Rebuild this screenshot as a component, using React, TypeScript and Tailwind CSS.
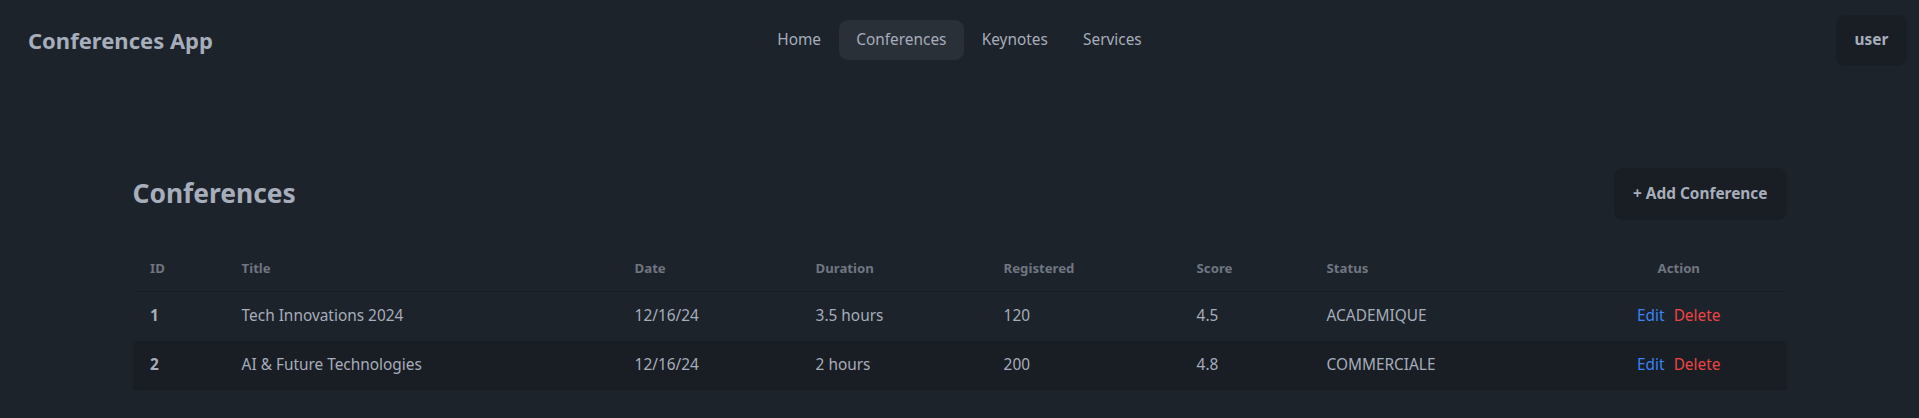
import { useState } from "react";

interface Conference {
  id: number;
  title: string;
  date: string;
  duration: string;
  registered: number;
  score: number;
  status: string;
}

const conferences: Conference[] = [
  { id: 1, title: "Tech Innovations 2024", date: "12/16/24", duration: "3.5 hours", registered: 120, score: 4.5, status: "ACADEMIQUE" },
  { id: 2, title: "AI & Future Technologies", date: "12/16/24", duration: "2 hours", registered: 200, score: 4.8, status: "COMMERCIALE" },
];

const links = ["Home", "Conferences", "Keynotes", "Services"];

function Navbar() {
  const [active, setActive] = useState("Conferences");
  return (
    <div className="flex h-[80px] items-center px-3">
      <div className="flex-1">
        <a className="px-4 text-[22px] font-bold">Conferences App</a>
      </div>
      <ul className="flex items-center">
        {links.map((link) => (
          <li key={link}>
            <button
              onClick={() => setActive(link)}
              className={`rounded-[9px] px-[17.6px] py-[9px] text-[15.4px] leading-[22px] ${
                active === link ? "bg-[#2a3038]" : ""
              }`}
            >
              {link}
            </button>
          </li>
        ))}
      </ul>
      <div className="flex flex-1 justify-end">
        <button className="h-[51px] w-[71px] rounded-[9px] bg-[#191e24] text-[15.4px] font-bold">user</button>
      </div>
    </div>
  );
}

export default function App() {
  return (
    <div
      className="min-h-screen bg-[#1d232a] text-[#a6adbb]"
      style={{ fontFamily: '"Noto Sans", "Open Sans", sans-serif' }}
    >
      <Navbar />
      <div className="mx-auto max-w-[1654px] pt-[88px]">
        <div className="mb-[27px] flex items-center justify-between">
          <h1 className="text-[26.4px] font-bold">Conferences</h1>
          <button className="h-[52px] rounded-[9px] bg-[#191e24] px-[19px] text-[15.4px] font-bold">
            + Add Conference
          </button>
        </div>
        <table className="w-full table-fixed text-left text-[15.4px]">
          <colgroup>
            <col className="w-[91.5px]" />
            <col className="w-[393px]" />
            <col className="w-[181px]" />
            <col className="w-[188px]" />
            <col className="w-[193px]" />
            <col className="w-[130px]" />
            <col className="w-[262px]" />
            <col className="w-[215.5px]" />
          </colgroup>
          <thead>
            <tr className="border-b border-[#191e24] text-[13.2px] font-bold text-[#6f7681]">
              <th className="px-[17.6px] py-[13.2px] leading-[17.6px]">ID</th>
              <th className="px-[17.6px] py-[13.2px] leading-[17.6px]">Title</th>
              <th className="px-[17.6px] py-[13.2px] leading-[17.6px]">Date</th>
              <th className="px-[17.6px] py-[13.2px] leading-[17.6px]">Duration</th>
              <th className="px-[17.6px] py-[13.2px] leading-[17.6px]">Registered</th>
              <th className="px-[17.6px] py-[13.2px] leading-[17.6px]">Score</th>
              <th className="px-[17.6px] py-[13.2px] leading-[17.6px]">Status</th>
              <th className="px-[17.6px] py-[13.2px] text-center leading-[17.6px]">Action</th>
            </tr>
          </thead>
          <tbody>
            {conferences.map((c, i) => (
              <tr key={c.id} className={i % 2 === 1 ? "bg-[#191e24]" : ""}>
                <th className="px-[17.6px] py-[13.2px] font-bold leading-[22.6px]">{c.id}</th>
                <td className="px-[17.6px] py-[13.2px] leading-[22.6px]">{c.title}</td>
                <td className="px-[17.6px] py-[13.2px] leading-[22.6px]">{c.date}</td>
                <td className="px-[17.6px] py-[13.2px] leading-[22.6px]">{c.duration}</td>
                <td className="px-[17.6px] py-[13.2px] leading-[22.6px]">{c.registered}</td>
                <td className="px-[17.6px] py-[13.2px] leading-[22.6px]">{c.score}</td>
                <td className="px-[17.6px] py-[13.2px] leading-[22.6px]">{c.status}</td>
                <td className="px-[17.6px] py-[13.2px] text-center leading-[22.6px]">
                  <button className="mr-[9px] text-[#3b82f6]">Edit</button>
                  <button className="text-[#ef4444]">Delete</button>
                </td>
              </tr>
            ))}
          </tbody>
        </table>
      </div>
    </div>
  );
}
